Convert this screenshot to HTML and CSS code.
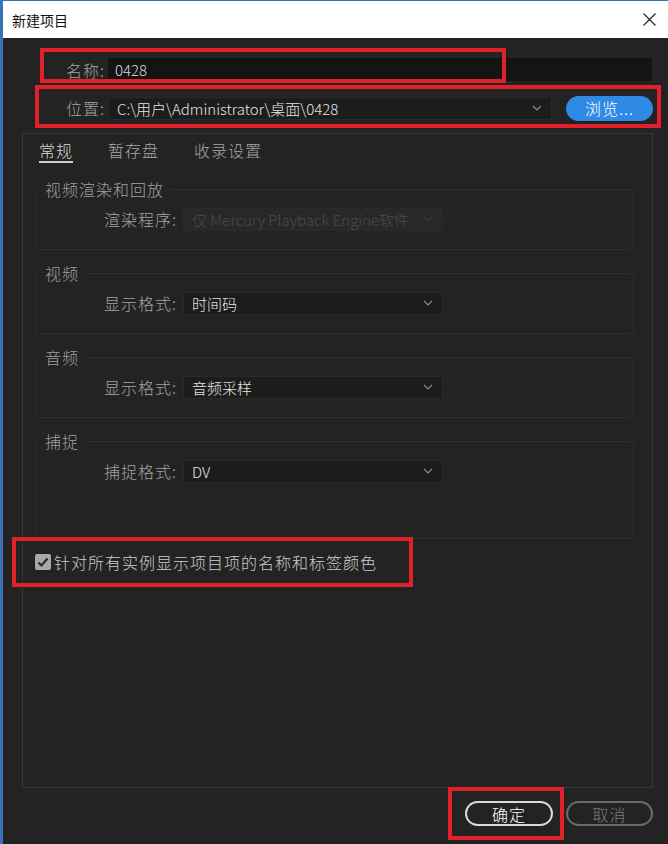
FILE: index.html
```html
<!DOCTYPE html>
<html lang="zh-CN">
<head>
<meta charset="utf-8">
<title>新建项目</title>
<link rel="stylesheet" href="styles.css">
</head>
<body>
<div class="window">
  <div class="titlebar">
    <span class="title">新建项目</span>
    <svg class="close" width="13" height="13" viewBox="0 0 13 13"><path d="M0.5 0.5 L12.5 12.5 M12.5 0.5 L0.5 12.5" stroke="#222" stroke-width="1.1" fill="none"/></svg>
  </div>
  <div class="main">
    <div class="name-row">
      <span class="lbl">名称:</span>
      <div class="input">0428</div>
    </div>
    <div class="loc-row">
      <span class="lbl">位置:</span>
      <div class="select loc-select"><span>C:\用户\Administrator\桌面\0428</span><svg class="chev" width="10" height="6" viewBox="0 0 10 6"><polyline points="1,1 5,5 9,1" fill="none" stroke="currentColor" stroke-width="1.2"/></svg></div>
      <button class="btn-blue">浏览...</button>
    </div>
    <div class="panel">
      <div class="tabs">
        <span class="tab active">常规</span>
        <span class="tab">暂存盘</span>
        <span class="tab">收录设置</span>
      </div>
      <fieldset class="group">
        <legend>视频渲染和回放</legend>
        <div class="frow">
          <span class="lbl">渲染程序:</span>
          <div class="select disabled"><span>仅 Mercury Playback Engine软件</span><svg class="chev" width="10" height="6" viewBox="0 0 10 6"><polyline points="1,1 5,5 9,1" fill="none" stroke="currentColor" stroke-width="1.2"/></svg></div>
        </div>
      </fieldset>
      <fieldset class="group">
        <legend>视频</legend>
        <div class="frow">
          <span class="lbl">显示格式:</span>
          <div class="select"><span>时间码</span><svg class="chev" width="10" height="6" viewBox="0 0 10 6"><polyline points="1,1 5,5 9,1" fill="none" stroke="currentColor" stroke-width="1.2"/></svg></div>
        </div>
      </fieldset>
      <fieldset class="group">
        <legend>音频</legend>
        <div class="frow">
          <span class="lbl">显示格式:</span>
          <div class="select"><span>音频采样</span><svg class="chev" width="10" height="6" viewBox="0 0 10 6"><polyline points="1,1 5,5 9,1" fill="none" stroke="currentColor" stroke-width="1.2"/></svg></div>
        </div>
      </fieldset>
      <fieldset class="group group-tall">
        <legend>捕捉</legend>
        <div class="frow">
          <span class="lbl">捕捉格式:</span>
          <div class="select"><span>DV</span><svg class="chev" width="10" height="6" viewBox="0 0 10 6"><polyline points="1,1 5,5 9,1" fill="none" stroke="currentColor" stroke-width="1.2"/></svg></div>
        </div>
      </fieldset>
      <div class="check-row">
        <span class="checkbox"><svg width="16" height="16" viewBox="0 0 16 16"><polyline points="3.5,8.5 6.5,11.5 12.5,4.5" fill="none" stroke="#2a2a2a" stroke-width="2.2"/></svg></span>
        <span class="check-text">针对所有实例显示项目项的名称和标签颜色</span>
      </div>
    </div>
    <div class="actions">
      <button class="btn btn-ok">确定</button>
      <button class="btn btn-cancel">取消</button>
    </div>
  </div>
</div>
<div class="mark mark-name"></div>
<div class="mark mark-loc"></div>
<div class="mark mark-check"></div>
<div class="mark mark-ok"></div>
</body>
</html>
```
FILE: styles.css
```css
* { box-sizing: border-box; }
html, body { margin: 0; padding: 0; }
body {
  width: 668px;
  height: 844px;
  overflow: hidden;
  position: relative;
  background: #232323;
  font-family: "Noto Sans CJK SC Light", "Noto Sans CJK SC DemiLight", "Noto Sans CJK SC", "Noto Sans", sans-serif;
  font-weight: 300;
}
.window {
  height: 844px;
  display: flex;
  flex-direction: column;
  border-left: 3px solid #3b72b3;
  border-top: 1px solid #3b72b3;
}
.titlebar {
  flex: none;
  height: 37px;
  background: #ffffff;
  display: flex;
  align-items: center;
  justify-content: space-between;
  padding: 0 12px 0 9px;
}
.title { font-family: "Noto Sans CJK SC", sans-serif; font-size: 14px; color: #111; font-weight: 400; }
.close { display: block; }
.main {
  flex: 1;
  background: #232323;
  display: flex;
  flex-direction: column;
  padding: 20px 15px 0 0;
}
.lbl {
  font-size: 16px;
  color: #a4a4a4;
  text-align: right;
  letter-spacing: 1px;
  white-space: nowrap;
}
.name-row {
  display: flex;
  align-items: center;
  height: 23px;
  padding-right: 1px;
}
.name-row .lbl, .loc-row .lbl { width: 102px; margin-right: 3px; flex: none; }
.input {
  flex: 1;
  height: 23px;
  background: #141414;
  border-radius: 2px;
  color: #dadada;
  font-size: 15px;
  line-height: 23px;
  padding-left: 7px;
}
.loc-row {
  display: flex;
  align-items: center;
  height: 26px;
  margin-top: 14px;
}
.select {
  height: 23px;
  background: #1c1c1c;
  border: 1px solid #2a2a2a;
  border-radius: 2px;
  display: flex;
  align-items: center;
  justify-content: space-between;
  padding: 0 9px 0 8px;
  font-size: 15px;
  color: #e4e4e4;
  white-space: nowrap;
  overflow: hidden;
}
.select .chev { color: #8a8a8a; flex: none; }
.loc-select { flex: 1; }
.select.disabled { background: #282828; border-color: #2a2a2a; color: #4b4b4b; }
.select.disabled .chev { color: #3c3c3c; }
.btn-blue {
  flex: none;
  width: 87px;
  height: 25px;
  margin-left: 14px;
  border: none;
  border-radius: 13px;
  background: #2f8ae6;
  color: #ffffff;
  font-family: inherit;
  font-weight: 300;
  font-size: 16px;
  letter-spacing: 1px;
  padding: 0;
  display: flex;
  align-items: center;
  justify-content: center;
  line-height: 1;
}
.panel {
  height: 655px;
  margin: 12px 0 0 19px;
  border: 1px solid #363636;
  padding: 6px 18px 0 12px;
}
.tabs {
  display: flex;
  gap: 35px;
  margin-left: 4px;
}
.tab {
  font-size: 16px;
  line-height: 20px;
  color: #a8a8a8;
  letter-spacing: 1px;
  padding-bottom: 1px;
  border-bottom: 2px solid transparent;
}
.tab.active { color: #dadada; border-bottom-color: #cfcfcf; }
.group {
  margin: 13px 0 0 0;
  border: 1px solid #2f2f2f;
  border-radius: 4px;
  padding: 8px 0 18px 0;
  min-width: 0;
}
.tabs + .group { margin-top: 16px; }
.group-tall { padding-bottom: 55px; }
.group legend {
  padding: 0 5px;
  margin-left: 4px;
  font-size: 16px;
  line-height: 20px;
  color: #a0a0a0;
  letter-spacing: 1px;
}
.frow { display: flex; align-items: center; }
.frow .lbl { width: 141px; margin-right: 6px; flex: none; }
.frow .select { width: 260px; }
.check-row {
  display: flex;
  align-items: center;
  gap: 3px;
  margin-top: 13px;
}
.checkbox {
  width: 16px;
  height: 16px;
  background: #a8a8a8;
  border-radius: 2px;
  display: block;
}
.checkbox svg { display: block; }
.check-text {
  font-size: 16px;
  line-height: 20px;
  color: #cccccc;
  letter-spacing: 1px;
}
.actions {
  display: flex;
  justify-content: flex-end;
  gap: 13px;
  margin-top: 13px;
}
.btn {
  height: 25px;
  border-radius: 13px;
  background: transparent;
  font-family: inherit;
  font-weight: 300;
  font-size: 16px;
  letter-spacing: 1px;
  padding: 0;
  display: flex;
  align-items: center;
  justify-content: center;
  line-height: 1;
}
.btn-ok { width: 88px; border: 2px solid #dadada; color: #ffffff; }
.btn-cancel { width: 87px; border: 2px solid #6a6a6a; color: #7c7c7c; }
.mark {
  position: absolute;
  border: 4px solid #e0202a;
  pointer-events: none;
}
.mark-name { left: 40px; top: 48px; width: 466px; height: 35px; }
.mark-loc { left: 35px; top: 85px; width: 626px; height: 43px; }
.mark-check { left: 12px; top: 537px; width: 401px; height: 50px; }
.mark-ok { left: 448px; top: 787px; width: 116px; height: 53px; }
```
